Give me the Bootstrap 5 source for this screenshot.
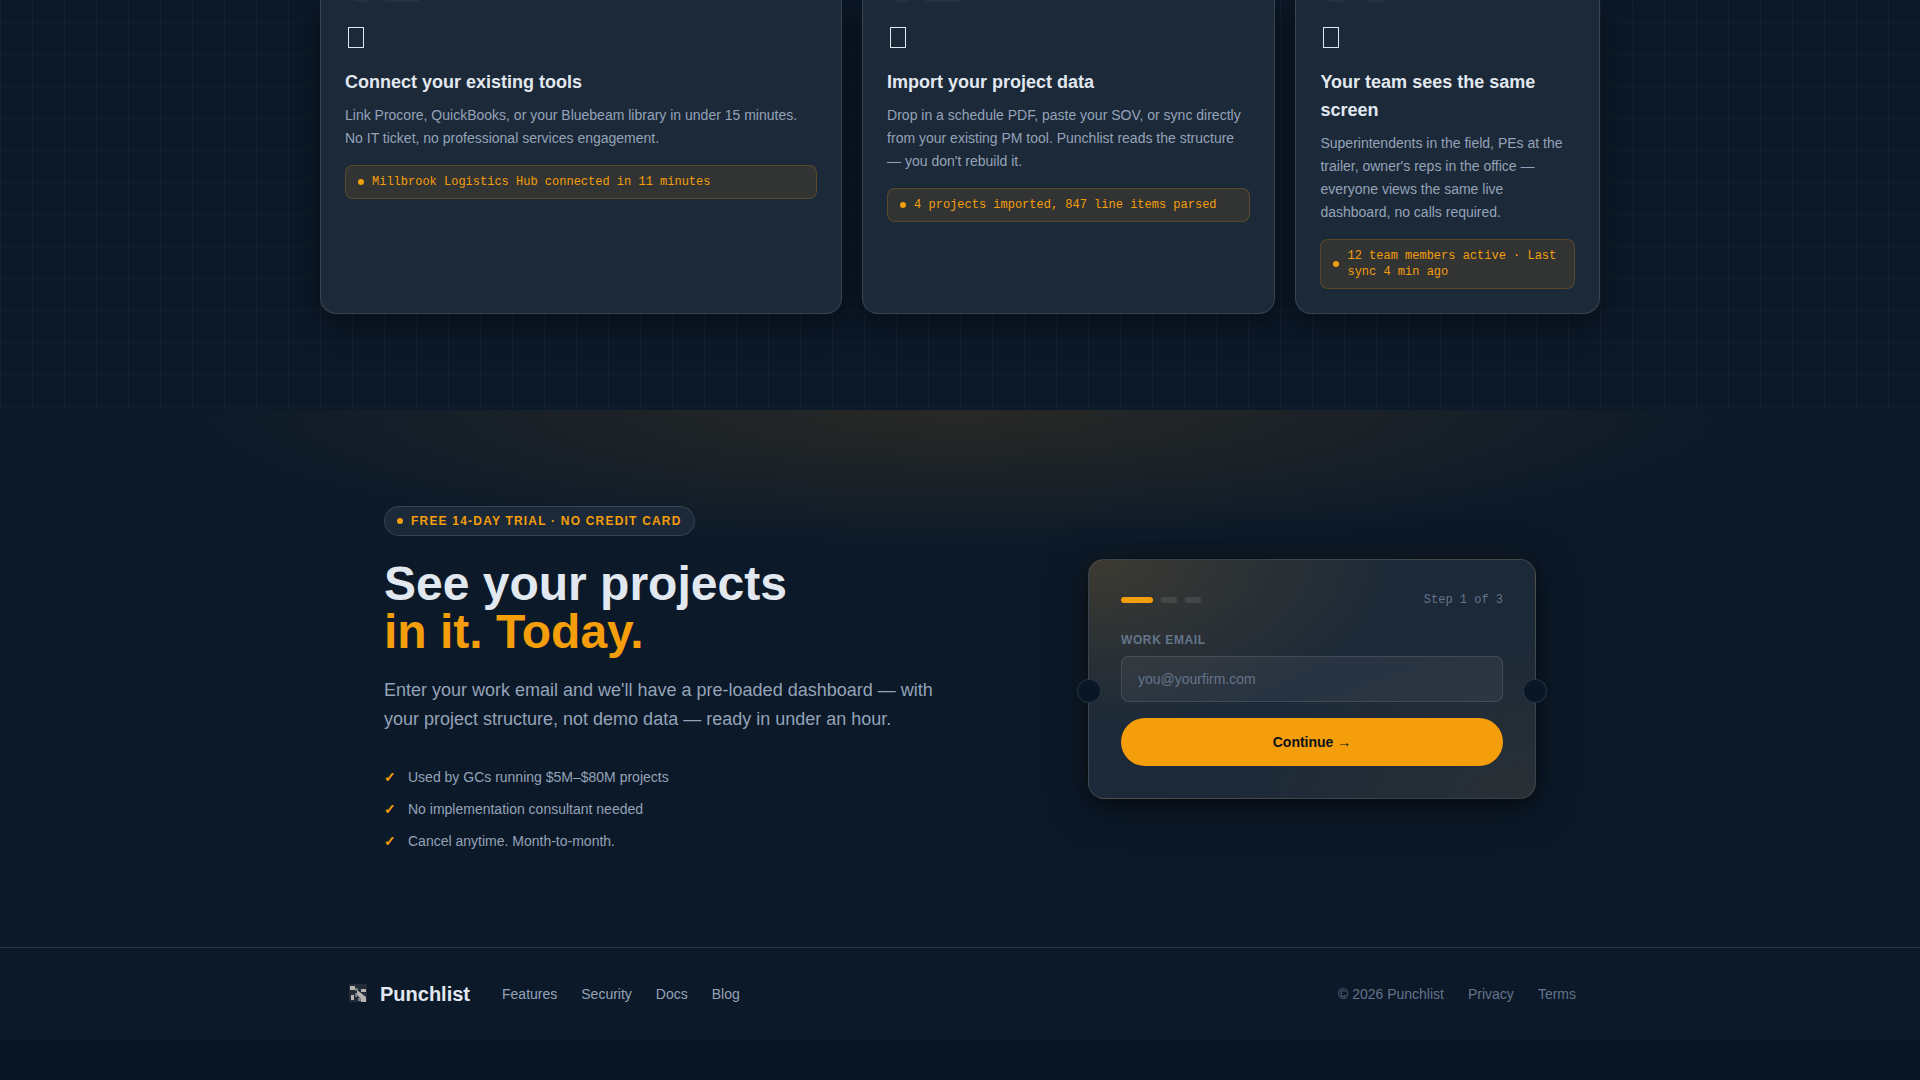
<!DOCTYPE html>
<html lang="en">
<head>
<meta charset="utf-8">
<meta name="viewport" content="width=device-width, initial-scale=1">
<title>Punchlist</title>
<link href="https://cdn.jsdelivr.net/npm/bootstrap@5.3.0/dist/css/bootstrap.min.css" rel="stylesheet">
<style>
:root{--ink:#e2e8f0;--soft:#94a3b8;--dim:#64748b;--amber:#f59e0b;--navy:#0c1929;--line:rgba(255,255,255,.12)}
body{background:#081626;color:var(--ink);font-family:"Liberation Sans",Arial,sans-serif;font-size:16px}
.shell{max-width:1280px;margin:0 auto}
.steps{background-color:var(--navy);background-image:linear-gradient(90deg,rgba(255,255,255,.03) 1px,transparent 1px),linear-gradient(rgba(255,255,255,.02) 1px,transparent 1px);background-size:32px 32px;background-position:0 22px;padding-bottom:96px}
.step-grid{display:grid;grid-template-columns:1.2fr .95fr .7fr;gap:20px}
.step-card{position:relative;overflow:hidden;background:#1c2938;border:1px solid var(--line);border-top:0;border-radius:0 0 16px 16px;padding:26px 24px 24px}
.step-wrap{box-shadow:0 8px 32px rgba(0,0,0,.5);border-radius:0 0 16px 16px;display:grid}
.ghost-num{position:absolute;left:20px;top:-59px;font-size:72px;line-height:72px;font-weight:700;color:rgba(255,255,255,.04)}
.glyph{display:block;margin:0 0 20px 2px}
.step-card h3{font-size:18px;line-height:28px;font-weight:700;margin:0 0 8px}
.step-card p{font-size:14px;line-height:23px;color:var(--soft);margin:0 0 15px}
.proof{font-family:"Liberation Mono",monospace;font-size:12px;line-height:16px;color:var(--amber);background:rgba(245,158,11,.1);border:1px solid rgba(245,158,11,.2);border-radius:8px;padding:8px 12px}
.pip{width:6px;height:6px;border-radius:50%;background:var(--amber);flex:none}
.cta{background:radial-gradient(ellipse 800px 140px at 50% 0,rgba(245,158,11,.12),transparent),var(--navy);padding:96px 0 95px}
.cta-row{max-width:1152px;margin:0 auto;gap:80px}
.pill{font-size:12px;line-height:18px;font-weight:700;letter-spacing:.1em;color:var(--amber);background:#1c2938;border:1px solid var(--line);border-radius:20px;padding:5px 12px}
.cta h2{font-size:48px;line-height:48px;font-weight:700;margin:24px 0 20px}
.cta h2 span{color:var(--amber)}
.pitch{font-size:18px;line-height:29px;color:var(--soft);margin-bottom:32px;max-width:560px}
.ticks{font-size:14px;line-height:22px;color:var(--soft);gap:10px}
.ticks b{color:var(--amber);width:16px}
.signup{position:relative;width:448px;flex:none;border:1px solid var(--line);border-radius:16px;padding:32px;background:radial-gradient(ellipse at 0 0,rgba(245,158,11,.15),transparent 50%),radial-gradient(ellipse at 100% 100%,rgba(245,158,11,.06),transparent 50%),#1c2938;box-shadow:0 8px 40px rgba(0,0,0,.5),0 2px 8px rgba(0,0,0,.4),-4px -4px 16px rgba(245,158,11,.05)}
.notch{position:absolute;top:55%;width:24px;height:24px;margin-top:-12px;border-radius:50%;background:#081626;border:1px solid rgba(255,255,255,.12)}
.notch-l{left:-12px}.notch-r{right:-12px}
.bar-on{width:32px;height:6px;border-radius:3px;background:var(--amber)}
.bar-off{width:16px;height:6px;border-radius:3px;background:rgba(255,255,255,.1)}
.stepno{font-family:"Liberation Mono",monospace;font-size:12px;line-height:16px;color:var(--dim)}
.signup label{font-size:12px;line-height:16px;font-weight:700;letter-spacing:.05em;color:var(--dim);margin:24px 0 8px}
.signup .form-control{font-size:14px;line-height:20px;height:46px;padding:12px 16px;background:rgba(255,255,255,.05);border:1px solid var(--line);border-radius:8px;color:var(--ink)}
.signup .form-control::placeholder{color:var(--dim)}
.go{height:48px;border-radius:24px;background:var(--amber);color:#0c1219;font-size:14px;font-weight:700;margin-top:16px}
.foot{background:var(--navy);border-top:1px solid rgba(255,255,255,.12);font-size:14px;line-height:22px;padding:32px 0}
.foot a{color:var(--soft);text-decoration:none}
.foot .brandname{color:var(--ink);font-size:20px;line-height:28px;font-weight:700}
.foot .legal,.foot .legal a{color:var(--dim)}
</style>
</head>
<body>
<section class="steps">
 <div class="shell step-grid">
  <div class="step-wrap"><article class="step-card">
   <span class="ghost-num" aria-hidden="true">01</span>
   <svg class="glyph" width="18" height="22" viewBox="0 0 18 22" aria-hidden="true"><rect x="1.5" y="1.5" width="15" height="20" fill="none" stroke="#e2e8f0"/></svg>
   <h3>Connect your existing tools</h3>
   <p>Link Procore, QuickBooks, or your Bluebeam library in under 15 minutes. No IT ticket, no professional services engagement.</p>
   <div class="proof d-flex align-items-center gap-2"><i class="pip"></i><span>Millbrook Logistics Hub connected in 11 minutes</span></div>
  </article></div>
  <div class="step-wrap"><article class="step-card">
   <span class="ghost-num" aria-hidden="true">02</span>
   <svg class="glyph" width="18" height="22" viewBox="0 0 18 22" aria-hidden="true"><rect x="1.5" y="1.5" width="15" height="20" fill="none" stroke="#e2e8f0"/></svg>
   <h3>Import your project data</h3>
   <p>Drop in a schedule PDF, paste your SOV, or sync directly from your existing PM tool. Punchlist reads the structure — you don't rebuild it.</p>
   <div class="proof d-flex align-items-center gap-2"><i class="pip"></i><span>4 projects imported, 847 line items parsed</span></div>
  </article></div>
  <div class="step-wrap"><article class="step-card">
   <span class="ghost-num" aria-hidden="true">03</span>
   <svg class="glyph" width="18" height="22" viewBox="0 0 18 22" aria-hidden="true"><rect x="1.5" y="1.5" width="15" height="20" fill="none" stroke="#e2e8f0"/></svg>
   <h3>Your team sees the same screen</h3>
   <p>Superintendents in the field, PEs at the trailer, owner's reps in the office — everyone views the same live dashboard, no calls required.</p>
   <div class="proof d-flex align-items-center gap-2"><i class="pip"></i><span>12 team members active · Last sync 4 min ago</span></div>
  </article></div>
 </div>
</section>
<section class="cta">
 <div class="cta-row d-flex align-items-center justify-content-between">
  <div>
   <div class="pill d-inline-flex align-items-center gap-2"><i class="pip"></i><span>FREE 14-DAY TRIAL · NO CREDIT CARD</span></div>
   <h2>See your projects<br><span>in it. Today.</span></h2>
   <p class="pitch">Enter your work email and we'll have a pre-loaded dashboard — with your project structure, not demo data — ready in under an hour.</p>
   <ul class="ticks list-unstyled d-flex flex-column mb-0">
    <li class="d-flex"><b class="me-2">✓</b>Used by GCs running $5M–$80M projects</li>
    <li class="d-flex"><b class="me-2">✓</b>No implementation consultant needed</li>
    <li class="d-flex"><b class="me-2">✓</b>Cancel anytime. Month-to-month.</li>
   </ul>
  </div>
  <form class="signup">
   <i class="notch notch-l"></i><i class="notch notch-r"></i>
   <div class="d-flex align-items-center gap-2">
    <i class="bar-on"></i><i class="bar-off"></i><i class="bar-off"></i>
    <span class="stepno ms-auto">Step 1 of 3</span>
   </div>
   <label class="d-block" for="email">WORK EMAIL</label>
   <input class="form-control" id="email" type="email" placeholder="you@yourfirm.com">
   <button class="btn go w-100" type="button">Continue →</button>
  </form>
 </div>
</section>
<footer class="foot">
 <div class="shell d-flex align-items-center px-4">
  <svg width="28" height="28" viewBox="0 0 28 28" aria-hidden="true"><g transform="translate(5 4)"><rect width="18" height="18" fill="#222c39"/><path d="M1 2h5v4H1zM12 5h5v3h-5zM8 6l4 3 5 4v5h-5v-3L8 11zM2 11h3v5H2z" fill="#b5b2b0"/><path d="M6 4h3v3H6zM6 9h2v4H6zM9 14h3v3H9z" fill="#77797d"/></g></svg>
  <a class="brandname ms-2" href="#">Punchlist</a>
  <nav class="d-flex gap-4 ms-4 ps-2"><a href="#">Features</a><a href="#">Security</a><a href="#">Docs</a><a href="#">Blog</a></nav>
  <div class="legal d-flex gap-4 ms-auto"><span>© 2026 Punchlist</span><a href="#">Privacy</a><a href="#">Terms</a></div>
 </div>
</footer>
<script src="https://cdn.jsdelivr.net/npm/bootstrap@5.3.0/dist/js/bootstrap.bundle.min.js"></script>
</body>
</html>
